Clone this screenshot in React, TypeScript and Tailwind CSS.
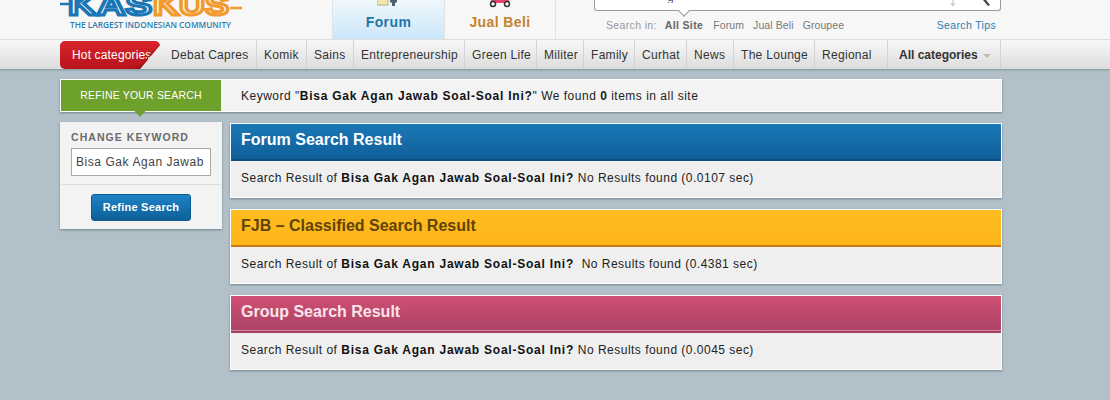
const navItems = [
  { label: 'Debat Capres', cls: 'w-[92px]' },
  { label: 'Komik', cls: 'w-[50px] border-l border-[#d2d2d2]' },
  { label: 'Sains', cls: 'w-[47px] border-l border-[#d2d2d2]' },
  { label: 'Entrepreneurship', cls: 'w-[111px] border-l border-[#d2d2d2]' },
  { label: 'Green Life', cls: 'w-[72px] border-l border-[#d2d2d2]' },
  { label: 'Militer', cls: 'w-[47px] border-l border-[#d2d2d2]' },
  { label: 'Family', cls: 'w-[51px] border-l border-[#d2d2d2]' },
  { label: 'Curhat', cls: 'w-[52px] border-l border-[#d2d2d2]' },
  { label: 'News', cls: 'w-[47px] border-l border-[#d2d2d2]' },
  { label: 'The Lounge', cls: 'w-[81px] border-l border-[#d2d2d2]' },
  { label: 'Regional', cls: 'w-[66px] border-l border-[#d2d2d2]' },
]

function Logo() {
  return (
    <svg width="182" height="32" viewBox="0 0 182 32" className="block">
      <path d="M0 4h9" stroke="#1b76b5" strokeWidth="2.5" />
      <path d="M170 8h12" stroke="#f29a2e" strokeWidth="2.5" />
      <text x="8" y="15" fontFamily="'Liberation Sans', sans-serif" fontWeight="700" fontSize="30" fill="#fff" stroke="#1b76b5" strokeWidth="3" textLength="84" lengthAdjust="spacingAndGlyphs">KAS</text>
      <text x="93" y="15" fontFamily="'Liberation Sans', sans-serif" fontWeight="700" fontSize="30" fill="#fff" stroke="#f29a2e" strokeWidth="3" textLength="76" lengthAdjust="spacingAndGlyphs">KUS</text>
      <text x="10" y="28" fontFamily="'Open Sans', sans-serif" fontWeight="600" fontSize="9" fill="#2b7cb0" textLength="161" lengthAdjust="spacingAndGlyphs">THE LARGEST INDONESIAN COMMUNITY</text>
    </svg>
  )
}

function ResultPanel({ title, head, titleCls, query, rest }: { title: string; head: string; titleCls: string; query: string; rest: string }) {
  return (
    <section className="bg-[#efefef] shadow-[0_1px_2px_rgba(60,80,90,0.55)] border border-white">
      <h2 className={`h-[37px] pl-[10px] pb-[3px] flex items-center text-[16px] font-bold ${head} ${titleCls}`}>{title}</h2>
      <p className="h-[36px] pl-[10px] pb-[2px] flex items-center text-[12px] tracking-[0.48px] text-[#222] whitespace-pre">
        Search Result of <b className="text-[#111] tracking-[0.76px]">{query}</b>{rest}
      </p>
    </section>
  )
}

export default function App() {
  return (
    <div className="w-[1110px] h-[400px] overflow-hidden bg-[#b1c0c9] font-['Liberation_Sans',Arial,sans-serif]">
      <header className="h-[40px] bg-[#f7f7f7] flex border-b border-[#e3e3e3] overflow-hidden">
        <div className="w-[332px] pl-[60px] flex items-end pb-[7px]">
          <Logo />
        </div>
        <div className="w-[112px] h-[39px] border-l border-[#dfe3e6] bg-gradient-to-b from-[#f0f7fc] to-[#cbe7fa] flex flex-col items-center">
          <svg width="22" height="8" viewBox="0 0 22 8" className="block -ml-[2px]">
            <rect x="0" y="-4" width="11" height="9" fill="#f3e8ab" stroke="#b5b08a" />
            <path d="M13 -1h7v3l-2 1v3h-3v-3l-2-1z" fill="#51606e" />
          </svg>
          <span className="mt-[6px] text-[14px] font-bold tracking-[0.4px] leading-[16px] text-[#1f75a8]">Forum</span>
        </div>
        <div className="w-[112px] h-[39px] border-x border-[#e2e2e2] flex flex-col items-center">
          <svg width="26" height="8" viewBox="0 0 26 8" className="block">
            <rect x="4" y="-3" width="18" height="6" fill="#e8446d" />
            <circle cx="6" cy="4" r="2.5" fill="#fff" stroke="#333" strokeWidth="1.5" />
            <circle cx="20" cy="4" r="2.5" fill="#fff" stroke="#333" strokeWidth="1.5" />
          </svg>
          <span className="mt-[6px] text-[14px] font-bold tracking-[0.4px] leading-[16px] text-[#c4822f]">Jual Beli</span>
        </div>
        <div className="ml-[38px] w-[407px]">
          <div className="relative h-[11px] bg-white border border-t-0 border-[#9a9a9a] rounded-b-[3px] flex justify-between items-start">
            <span className="ml-[72px] h-[3px] overflow-hidden">
              <span className="block -mt-[10px] leading-[14px] text-[12px] text-[#555]">g</span>
            </span>
            <svg width="42" height="9" viewBox="0 0 42 9" className="mr-[8px]">
              <path d="M3 0v5M1 3l2 3 2-3" stroke="#bbb" fill="none" />
              <path d="M33 0l5 6 2-1-4-5z" fill="#444" />
            </svg>
            <span className="absolute left-[85px] -bottom-[5px] w-[8px] h-[8px] rotate-45 bg-white border-r border-b border-[#9a9a9a]" />
          </div>
          <div className="mt-[8px] flex items-center text-[10.5px] tracking-[0.1px] leading-[12px] text-[#777]">
            <span className="ml-[12px] text-[#999] tracking-[0.35px]">Search in:</span>
            <b className="ml-[8px] text-[#666] tracking-[0.35px]">All Site</b>
            <span className="ml-[10px]">Forum</span>
            <span className="ml-[9px]">Jual Beli</span>
            <span className="ml-[9px]">Groupee</span>
            <span className="ml-auto mr-[5px] text-[#2a7fb0] tracking-[0.35px]">Search Tips</span>
          </div>
        </div>
      </header>

      <nav className="h-[29px] bg-gradient-to-b from-[#f8f8f8] to-[#dcdcdc] shadow-[0_1px_2px_rgba(80,100,110,0.5)] pl-[60px] flex text-[12px] tracking-[0.3px] text-[#333]">
        <div className="relative mt-[1px] w-[100px] h-[28px] rounded-l-[5px] rounded-tr-[5px] bg-gradient-to-b from-[#d8232a] to-[#b8141c] text-white flex items-center pl-[12px] tracking-[0.15px] shrink-0 [clip-path:polygon(0_0,100%_0,100%_15%,80%_100%,0_100%)]">
          Hot categories
          <svg width="26" height="28" viewBox="0 0 26 28" className="absolute right-0 top-0">
            <path d="M26 3 L6 28 L0 28 Q10 24 14 16 Z" fill="#8e1218" />
            <path d="M14 16 L21 16 L14 24 Z" fill="#cfc9c9" />
          </svg>
        </div>
        <div className="flex pl-[4px]">
          {navItems.map(item => (
            <a key={item.label} className={`h-[29px] flex items-center pl-[7px] whitespace-nowrap ${item.cls}`}>{item.label}</a>
          ))}
        </div>
        <div className="ml-auto mr-[109px] h-[29px] w-[114px] border-x border-[#d2d2d2] flex items-center pl-[11px] font-bold text-[#333] tracking-normal">
          All categories
          <span className="ml-[5px] mt-[2px] w-0 h-0 border-x-[4px] border-x-transparent border-t-[4px] border-t-[#bbb]" />
        </div>
      </nav>

      <main className="w-[942px] ml-[60px] mt-[10px]">
        <div className="h-[33px] bg-[#f3f3f3] shadow-[0_1px_2px_rgba(60,80,90,0.55)] flex items-center border border-white">
          <div className="relative w-[160px] h-full bg-[#6ea12b] text-white text-[10.5px] tracking-[0.18px] flex items-center justify-center">
            REFINE YOUR SEARCH
            <span className="absolute left-[75px] -bottom-[4px] w-[8px] h-[8px] rotate-45 bg-[#6ea12b]" />
          </div>
          <p className="ml-[20px] text-[12px] tracking-[0.5px] text-[#222]">
            Keyword "<b className="text-[#111] tracking-[0.76px]">Bisa Gak Agan Jawab Soal-Soal Ini?</b>" We found <b>0</b> items in all site
          </p>
        </div>

        <div className="mt-[10px] flex gap-[8px] items-start">
          <aside className="w-[162px] h-[107px] bg-[#f3f3f3] shadow-[0_1px_2px_rgba(60,80,90,0.55)] shrink-0">
            <h3 className="pt-[9px] pl-[11px] text-[10.5px] leading-[12px] font-bold tracking-[1.05px] text-[#6b6b6b]">CHANGE KEYWORD</h3>
            <div className="mx-[11px] mt-[5px] w-[140px] h-[28px] bg-white border border-[#aaa] flex items-center pl-[4px] overflow-hidden text-[12px] tracking-[0.56px] text-[#444] whitespace-nowrap">
              Bisa Gak Agan Jawab
            </div>
            <div className="mt-[8px] mx-[1px] border-t border-[#ddd]" />
            <button className="block mx-auto mt-[9px] w-[100px] h-[27px] rounded-[3px] bg-gradient-to-b from-[#1b84c6] to-[#0f5f98] border border-[#0d5a90] text-white text-[11px] font-bold tracking-[0.25px]">
              Refine Search
            </button>
          </aside>

          <div className="flex-1 flex flex-col gap-[11px] mt-[1px]">
            <ResultPanel title="Forum Search Result" head="bg-gradient-to-b from-[#1a78b6] to-[#105f99] border-b-2 border-[#0c4d7d]" titleCls="text-white" query="Bisa Gak Agan Jawab Soal-Soal Ini?" rest=" No Results found (0.0107 sec)" />
            <ResultPanel title="FJB – Classified Search Result" head="bg-gradient-to-b from-[#ffbd20] to-[#fdb518] border-b-2 border-[#c9791c]" titleCls="text-[#5f4309]" query="Bisa Gak Agan Jawab Soal-Soal Ini?" rest="  No Results found (0.4381 sec)" />
            <ResultPanel title="Group Search Result" head="bg-gradient-to-b from-[#d04f74] to-[#aa4365] border-b-2 border-[#a03f60] shadow-[inset_0_-1px_0_#d8809c]" titleCls="text-[#fbe3ea]" query="Bisa Gak Agan Jawab Soal-Soal Ini?" rest=" No Results found (0.0045 sec)" />
          </div>
        </div>
      </main>
    </div>
  )
}
